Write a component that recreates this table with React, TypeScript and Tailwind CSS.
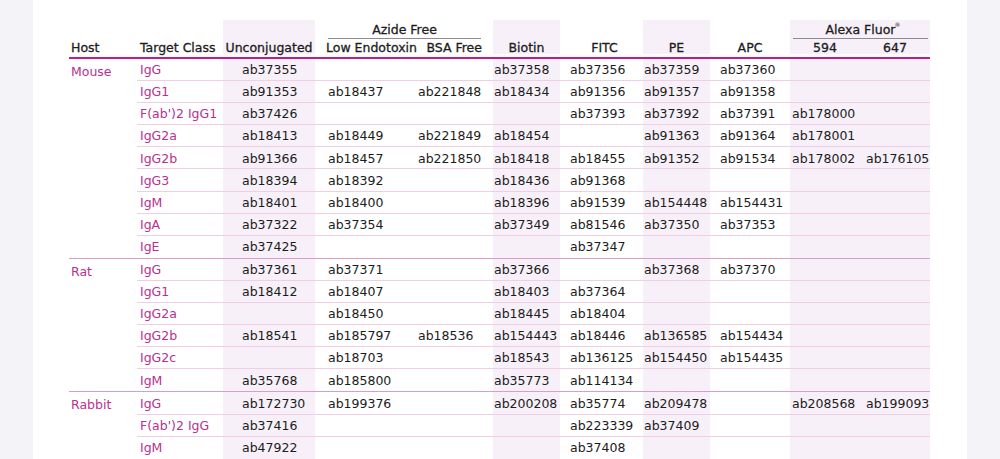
import React from 'react';

// ── Data ────────────────────────────────────────────────────
type Row = { target: string; cells: string[] };
type Group = { host: string; rows: Row[] };

const GROUPS: Group[] = [
  {
    host: 'Mouse',
    rows: [
      { target: 'IgG', cells: ['ab37355', '', '', 'ab37358', 'ab37356', 'ab37359', 'ab37360', '', ''] },
      { target: 'IgG1', cells: ['ab91353', 'ab18437', 'ab221848', 'ab18434', 'ab91356', 'ab91357', 'ab91358', '', ''] },
      { target: "F(ab')2 IgG1", cells: ['ab37426', '', '', '', 'ab37393', 'ab37392', 'ab37391', 'ab178000', ''] },
      { target: 'IgG2a', cells: ['ab18413', 'ab18449', 'ab221849', 'ab18454', '', 'ab91363', 'ab91364', 'ab178001', ''] },
      { target: 'IgG2b', cells: ['ab91366', 'ab18457', 'ab221850', 'ab18418', 'ab18455', 'ab91352', 'ab91534', 'ab178002', 'ab176105'] },
      { target: 'IgG3', cells: ['ab18394', 'ab18392', '', 'ab18436', 'ab91368', '', '', '', ''] },
      { target: 'IgM', cells: ['ab18401', 'ab18400', '', 'ab18396', 'ab91539', 'ab154448', 'ab154431', '', ''] },
      { target: 'IgA', cells: ['ab37322', 'ab37354', '', 'ab37349', 'ab81546', 'ab37350', 'ab37353', '', ''] },
      { target: 'IgE', cells: ['ab37425', '', '', '', 'ab37347', '', '', '', ''] },
    ],
  },
  {
    host: 'Rat',
    rows: [
      { target: 'IgG', cells: ['ab37361', 'ab37371', '', 'ab37366', '', 'ab37368', 'ab37370', '', ''] },
      { target: 'IgG1', cells: ['ab18412', 'ab18407', '', 'ab18403', 'ab37364', '', '', '', ''] },
      { target: 'IgG2a', cells: ['', 'ab18450', '', 'ab18445', 'ab18404', '', '', '', ''] },
      { target: 'IgG2b', cells: ['ab18541', 'ab185797', 'ab18536', 'ab154443', 'ab18446', 'ab136585', 'ab154434', '', ''] },
      { target: 'IgG2c', cells: ['', 'ab18703', '', 'ab18543', 'ab136125', 'ab154450', 'ab154435', '', ''] },
      { target: 'IgM', cells: ['ab35768', 'ab185800', '', 'ab35773', 'ab114134', '', '', '', ''] },
    ],
  },
  {
    host: 'Rabbit',
    rows: [
      { target: 'IgG', cells: ['ab172730', 'ab199376', '', 'ab200208', 'ab35774', 'ab209478', '', 'ab208568', 'ab199093'] },
      { target: "F(ab')2 IgG", cells: ['ab37416', '', '', '', 'ab223339', 'ab37409', '', '', ''] },
      { target: 'IgM', cells: ['ab47922', '', '', '', 'ab37408', '', '', '', ''] },
    ],
  },
];

// ── Column styles (written out in full so Tailwind picks them up) ──
const COLS = [
  'w-[92px] pl-[19px] bg-[#f7f0f8]',
  'w-[97px] pl-[13px]',
  'w-[81px] pl-[6px]',
  'w-[67px] pl-[1px] bg-[#f7f0f8]',
  'w-[83px] pl-[10px]',
  'w-[67px] pl-[1px] bg-[#f7f0f8]',
  'w-[80px] pl-[10px]',
  'w-[70px] pl-[2px] bg-[#f7f0f8]',
  'w-[70px] pl-[6px] bg-[#f7f0f8]',
];

const shade = 'bg-[#f7f0f8]';

function HeaderTop() {
  return (
    <div className="flex h-[19px] [-webkit-text-stroke:0.3px_#1c1c1c]">
      <div className="w-[68px]" />
      <div className="w-[86px]" />
      <div className={`w-[92px] ${shade}`} />
      <div className="w-[178px] pl-[13px] pr-[12px] flex flex-col items-center">
        <span className="leading-[14px] pt-[3px]">Azide Free</span>
        <div className="w-full h-px shrink-0 bg-[#8c8c8c] mt-[1px]" />
      </div>
      <div className={`w-[67px] ${shade}`} />
      <div className="w-[83px]" />
      <div className={`w-[67px] ${shade}`} />
      <div className="w-[80px]" />
      <div className={`w-[140px] ${shade} pl-[3px] pr-[2px] flex flex-col items-center`}>
        <span className="leading-[14px] pt-[3px] relative">
          Alexa Fluor
          <span className="absolute -right-[5px] top-[2px] text-[6px] leading-none [-webkit-text-stroke:0px]">®</span>
        </span>
        <div className="w-full h-px shrink-0 bg-[#8c8c8c] mt-[1px]" />
      </div>
    </div>
  );
}

function HeaderLabels() {
  return (
    <div className="flex h-[18px] items-end pb-[3px] leading-none [-webkit-text-stroke:0.3px_#1c1c1c]">
      <div className="w-[68px] pl-[2px]">Host</div>
      <div className="w-[86px] pl-[3px] whitespace-nowrap">Target Class</div>
      <div className={`w-[92px] ${shade} h-full flex items-end justify-center whitespace-nowrap`}>Unconjugated</div>
      <div className="w-[97px] pl-[11px] whitespace-nowrap">Low Endotoxin</div>
      <div className="w-[81px] text-right pr-[11px] whitespace-nowrap">BSA Free</div>
      <div className={`w-[67px] ${shade} h-full flex items-end justify-center`}>Biotin</div>
      <div className="w-[83px] text-center pl-[6px]">FITC</div>
      <div className={`w-[67px] ${shade} h-full flex items-end justify-center`}>PE</div>
      <div className="w-[80px] text-center">APC</div>
      <div className={`w-[70px] ${shade} h-full flex items-end justify-center`}>594</div>
      <div className={`w-[70px] ${shade} h-full flex items-end justify-center`}>647</div>
    </div>
  );
}

export default function App() {
  return (
    <div className="w-full h-[459px] bg-[#f3f3f8] overflow-hidden">
      <div
        className="mx-auto w-[934px] h-full bg-white pl-[36px] pt-[20px] text-[12.5px] text-[#1c1c1c]"
        style={{ fontFamily: '"DejaVu Sans", "Liberation Sans", sans-serif' }}
      >
        <div className="w-[861px]">
          <HeaderTop />
          <HeaderLabels />
          <div className="h-[2px] bg-[#c01b8d]" />

          {GROUPS.map((g) => (
            <div key={g.host} className="flex border-b border-[#dc9cc9]">
              <div className="w-[68px] pl-[2px] pt-[6px] text-[#b7318f] leading-[14px]">{g.host}</div>
              <div className="flex flex-col">
                {g.rows.map((r, i) => (
                  <div
                    key={r.target}
                    className={`flex h-[22.1px] ${i < g.rows.length - 1 ? 'border-b border-[#f1cde6]' : ''}`}
                  >
                    <div className="w-[86px] pl-[3px] pt-[2px] flex items-center text-[#b7318f] whitespace-nowrap">
                      {r.target}
                    </div>
                    {r.cells.map((c, j) => (
                      <div key={j} className={`${COLS[j]} pt-[2px] flex items-center whitespace-nowrap`}>
                        {c}
                      </div>
                    ))}
                  </div>
                ))}
              </div>
            </div>
          ))}
        </div>
      </div>
    </div>
  );
}
